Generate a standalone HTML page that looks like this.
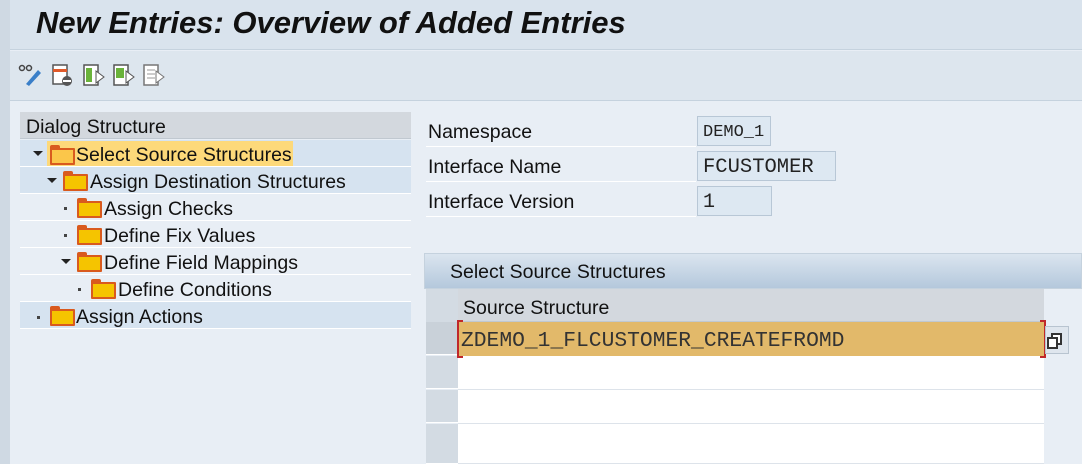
<!DOCTYPE html>
<html><head><style>
body{margin:0;width:1082px;height:464px;overflow:hidden;background:#e8eef5;font-family:"Liberation Sans",sans-serif;position:relative}
div{position:absolute;box-sizing:border-box}
.t{font-size:19.5px;color:#111;white-space:nowrap}
.row{left:20px;width:391px;height:27px;border-bottom:1px solid #fff}
.fold{width:25px;height:17px;background:#f5c400;border:2px solid #d95a1e;border-radius:1px}
.fold:before{content:"";position:absolute;left:-2px;top:-5px;width:10px;height:4px;background:#d95a1e;border-radius:2px 2px 0 0}
.tri{width:0;height:0;border-left:5px solid transparent;border-right:5px solid transparent;border-top:5px solid #222}
.dot{width:3px;height:3px;background:#444}
.inp{background:#dde8f2;border:1px solid #b8c7d6;font-family:"Liberation Mono",monospace;font-size:20px;padding:4px 5px;color:#222;white-space:nowrap}
.sel{left:426px;width:32px;height:33px;background:#d3dbe3;border-bottom:1px solid #fff}
.cell{left:458px;width:586px;height:34px;background:#fff;border-bottom:1px solid #dde3ea}
</style></head><body>
<div style="left:0;top:0;width:1082px;height:50px;background:#d9e3ed;border-bottom:1px solid #c5d2de"></div>
<div style="left:0;top:0;width:10px;height:464px;background:#cfd9e3"></div>
<div class="t" style="left:36px;top:5px;font-size:31px;font-weight:bold;font-style:italic;color:#111">New Entries: Overview of Added Entries</div>
<div style="left:10px;top:51px;width:1072px;height:50px;background:#dde6ee;border-bottom:1px solid #c5d2de"></div>
<svg style="position:absolute;left:18px;top:62px" width="160" height="26">
<g fill="none" stroke="#444" stroke-width="1.5"><circle cx="4" cy="6" r="2.5"/><circle cx="11" cy="6" r="2.5"/></g>
<path d="M8 22 L20 8 L23 11 L11 24 Z" fill="#3a7fc8"/>
<rect x="35" y="3" width="14" height="19" fill="#fff" stroke="#555" stroke-width="1.5"/><rect x="35" y="7" width="14" height="3" fill="#e05a2a"/><circle cx="49" cy="19" r="5" fill="#555"/><rect x="45" y="18" width="8" height="2" fill="#fff"/>
<rect x="66" y="3" width="14" height="20" fill="#fff" stroke="#555" stroke-width="1.5"/><rect x="68" y="6" width="6" height="14" fill="#6ab33a"/><path d="M78 9 L86 15 L78 21Z" fill="#fff" stroke="#555"/>
<rect x="96" y="3" width="14" height="20" fill="#fff" stroke="#555" stroke-width="1.5"/><rect x="98" y="6" width="8" height="10" fill="#6ab33a"/><path d="M108 9 L116 15 L108 21Z" fill="#fff" stroke="#555"/>
<rect x="126" y="3" width="14" height="20" fill="#fff" stroke="#777" stroke-width="1.5"/><path d="M129 8h8M129 12h8M129 16h8" stroke="#999"/><path d="M138 9 L146 15 L138 21Z" fill="#fff" stroke="#777"/>
</svg>
<div style="left:20px;top:112px;width:391px;height:27px;background:#d3d8de;border-bottom:1px solid #c0c8d0"></div>
<div class="t" style="left:26px;top:116px">Dialog Structure</div>
<div class="row" style="top:140px;background:#d6e3f0"></div>
<div style="left:47px;top:141px;width:246px;height:25px;background:#fdd97a"></div>
<div class="row" style="top:167px;background:#d6e3f0"></div>
<div class="row" style="top:194px;background:#e8eef5"></div>
<div class="row" style="top:221px;background:#e8eef5"></div>
<div class="row" style="top:248px;background:#e8eef5"></div>
<div class="row" style="top:275px;background:#e8eef5"></div>
<div class="row" style="top:302px;background:#d6e3f0"></div>
<div class="tri" style="left:33px;top:151px"></div><div class="fold" style="left:50px;top:148px;background:#fbc64a"></div><div class="t" style="left:76px;top:144px">Select Source Structures</div>
<div class="tri" style="left:47px;top:178px"></div><div class="fold" style="left:63px;top:174px"></div><div class="t" style="left:90px;top:171px">Assign Destination Structures</div>
<div class="dot" style="left:64px;top:207px"></div><div class="fold" style="left:77px;top:201px"></div><div class="t" style="left:104px;top:198px">Assign Checks</div>
<div class="dot" style="left:64px;top:234px"></div><div class="fold" style="left:77px;top:228px"></div><div class="t" style="left:104px;top:225px">Define Fix Values</div>
<div class="tri" style="left:61px;top:259px"></div><div class="fold" style="left:77px;top:255px"></div><div class="t" style="left:104px;top:252px">Define Field Mappings</div>
<div class="dot" style="left:78px;top:288px"></div><div class="fold" style="left:91px;top:282px"></div><div class="t" style="left:118px;top:279px">Define Conditions</div>
<div class="dot" style="left:37px;top:316px"></div><div class="fold" style="left:50px;top:309px"></div><div class="t" style="left:76px;top:306px">Assign Actions</div>

<div class="t" style="left:428px;top:121px">Namespace</div>
<div class="t" style="left:428px;top:156px">Interface Name</div>
<div class="t" style="left:428px;top:191px">Interface Version</div>
<div style="left:426px;top:146px;width:270px;height:1px;background:#fff"></div>
<div style="left:426px;top:181px;width:270px;height:1px;background:#fff"></div>
<div style="left:426px;top:216px;width:270px;height:1px;background:#fff"></div>
<div class="inp" style="left:697px;top:116px;width:74px;height:30px;font-size:17px;padding-top:6px">DEMO_1</div>
<div class="inp" style="left:697px;top:151px;width:139px;height:30px;font-size:20.5px">FCUSTOMER</div>
<div class="inp" style="left:697px;top:186px;width:75px;height:30px">1</div>

<div style="left:424px;top:253px;width:658px;height:36px;background:linear-gradient(#dbe5ef,#b4c8dc);border:1px solid #c5d2de"></div>
<div class="t" style="left:450px;top:261px">Select Source Structures</div>
<div style="left:426px;top:289px;width:32px;height:33px;background:#d3dbe3"></div>
<div style="left:458px;top:289px;width:586px;height:33px;background:#d3d8de;border-bottom:1px solid #c0c8d0"></div>
<div class="t" style="left:463px;top:297px">Source Structure</div>
<div class="sel" style="top:322px;background:#c9d1d9"></div>
<div class="sel" style="top:356px"></div>
<div class="sel" style="top:390px"></div>
<div class="sel" style="top:424px;height:40px"></div>
<div class="cell" style="top:322px;background:#e2b96a;border:none"></div>
<div class="cell" style="top:356px"></div>
<div class="cell" style="top:390px"></div>
<div class="cell" style="top:424px;height:40px"></div>
<div class="t" style="left:461px;top:329px;font-family:'Liberation Mono',monospace;font-size:21.3px;color:#333">ZDEMO_1_FLCUSTOMER_CREATEFROMD</div>
<div style="left:457px;top:320px;width:6px;height:38px;border:2px solid #c0282a;border-right:none"></div>
<div style="left:1040px;top:320px;width:6px;height:38px;border:2px solid #c0282a;border-left:none"></div>
<div style="left:1045px;top:326px;width:24px;height:28px;background:#dfe6ee;border:1px solid #b8c4d0"></div>
<div style="left:1051px;top:333px;width:11px;height:12px;border:2px solid #333;background:#fff"></div>
<div style="left:1047px;top:337px;width:11px;height:12px;border:2px solid #333;background:#fff"></div>
</body></html>
